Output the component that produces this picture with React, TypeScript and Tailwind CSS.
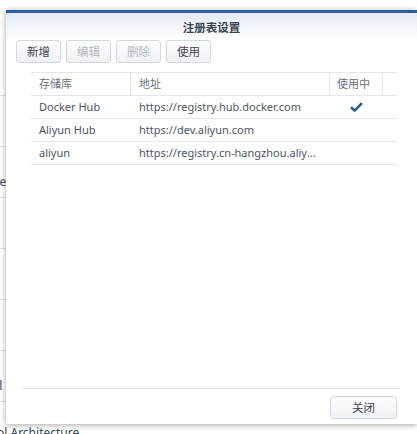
import React from 'react';

const font = { fontFamily: '"Noto Sans", "Noto Sans CJK SC", sans-serif' };

const bgRows = ['', 'pe', '', '', 'E', 'ol'];

const registries = [
  { name: 'Docker Hub', url: 'https://registry.hub.docker.com', active: true },
  { name: 'Aliyun Hub', url: 'https://dev.aliyun.com', active: false },
  { name: 'aliyun', url: 'https://registry.cn-hangzhou.aliyuncs.com', active: false },
];

const ToolButton: React.FC<{ label: string; disabled?: boolean }> = ({ label, disabled }) => (
  <button
    className={`w-[45px] h-[23px] rounded-[3px] border border-[#d3d9e0] bg-gradient-to-b from-[#fdfdfe] to-[#eef1f5] text-[11.5px] ${
      disabled ? 'text-[#b3b9c0]' : 'text-[#3f4650]'
    }`}
  >
    {label}
  </button>
);

export default function App() {
  return (
    <div className="relative w-[417px] h-[434px] overflow-hidden bg-white text-[#3f4650]" style={font}>
      {/* page behind the dialog */}
      <div className="pt-[95px]">
        <div className="border-t border-[#e3e6ea]" />
        {bgRows.map((t, i) => (
          <div key={i} className="h-[51px] border-b border-[#e3e6ea] flex items-end pb-[6px] text-[12px] text-[#3a4658] -ml-[8px]">
            <span>{t}</span>
          </div>
        ))}
        <div className="text-[12px] text-[#3a4658] mt-[25px] leading-none -ml-[3px]">ol Architecture</div>
      </div>

      {/* dialog */}
      <div className="absolute left-[6px] top-[10px] right-0 h-[414px] bg-white border-t-[3px] border-[#2f5d9c] shadow-[0_1px_6px_rgba(0,0,0,0.35)] flex flex-col">
        <div className="h-[27px] bg-gradient-to-b from-[#e4ebf4] to-white flex items-center justify-center">
          <span className="text-[11.5px] font-bold text-[#3a4452] pt-[2px]">注册表设置</span>
        </div>

        <div className="flex gap-[5px] pl-[10px]">
          <ToolButton label="新增" />
          <ToolButton label="编辑" disabled />
          <ToolButton label="删除" disabled />
          <ToolButton label="使用" />
        </div>

        <div className="ml-[25px] mr-[20px] mt-[9px] border-t border-[#e3e6ea] text-[11px]">
          <div className="flex h-[23px] border-b border-[#e3e6ea] text-[#6b737d]">
            <div className="w-[100px] pl-[8px] border-r border-[#e3e6ea] flex items-center">存储库</div>
            <div className="w-[199px] pl-[8px] border-r border-[#e3e6ea] flex items-center">地址</div>
            <div className="w-[53px] pl-[7px] border-r border-[#e3e6ea] flex items-center">使用中</div>
            <div className="flex-1" />
          </div>
          {registries.map((r) => (
            <div key={r.name} className="flex h-[23px] border-b border-[#e3e6ea] text-[#4e5661]">
              <div className="w-[100px] pl-[8px] flex items-center">{r.name}</div>
              <div className="w-[199px] pl-[8px] pr-[8px] flex items-center overflow-hidden">
                <span className="truncate">{r.url}</span>
              </div>
              <div className="w-[53px] flex items-center justify-center">
                {r.active && (
                  <svg width="13" height="10" viewBox="0 0 13 10">
                    <path d="M1 5.2 L4.6 8.6 L12 1.2" fill="none" stroke="#2f5a8e" strokeWidth="2.6" strokeLinejoin="round" />
                  </svg>
                )}
              </div>
            </div>
          ))}
        </div>

        <div className="flex-1" />

        <div className="mx-[17px] border-t border-[#dfe3e8]" />
        <div className="flex justify-end pr-[20px] pt-[7px] pb-[5px]">
          <button className="w-[67px] h-[23px] rounded-[3px] border border-[#d3d9e0] bg-gradient-to-b from-[#fdfdfe] to-[#eef1f5] text-[11.5px] text-[#3f4650]">
            关闭
          </button>
        </div>
      </div>
    </div>
  );
}
